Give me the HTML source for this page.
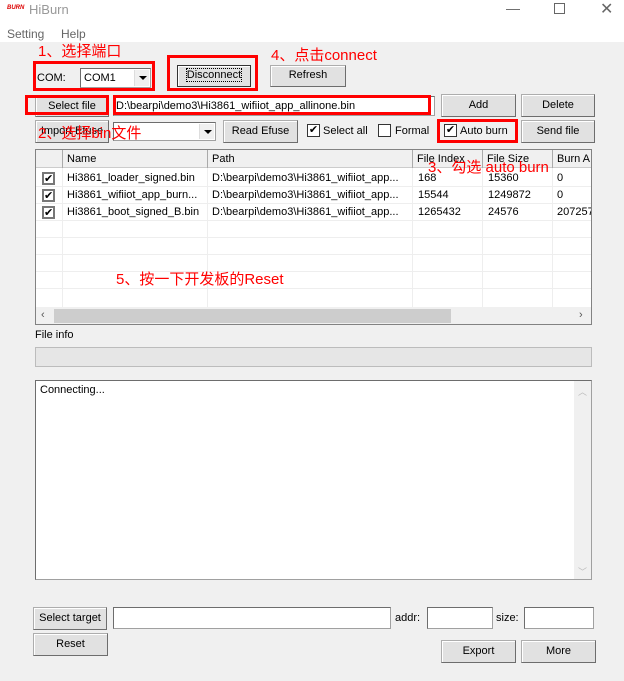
<!DOCTYPE html>
<html><head><meta charset="utf-8">
<style>
*{box-sizing:border-box;margin:0;padding:0}
body{width:624px;height:681px;position:relative;background:#f0f0f0;font-family:"Liberation Sans","Noto Sans CJK SC",sans-serif;font-size:11px;color:#000;overflow:hidden}
.a{position:absolute;white-space:nowrap}
.btn{position:absolute;background:#e1e1e1;border:1px solid #adadad;border-right-color:#6d6d6d;border-bottom-color:#6d6d6d;box-shadow:inset 1px 1px #fff;text-align:center;font-size:11px}
.tb{position:absolute;background:#fff;border:1px solid #a0a0a0;border-top-color:#6d6d6d;border-left-color:#6d6d6d}
.red{position:absolute;border:3px solid #f00}
.rt{position:absolute;color:#f00;font-size:15px;font-family:"Liberation Sans","Noto Sans CJK SC",sans-serif;white-space:nowrap}
.cb{position:absolute;width:13px;height:13px;border:1px solid #333;background:#fff;font-size:11px;line-height:11px;text-align:center}
.dd{position:absolute;width:15px;background:#f0f0f0;border-left:1px solid #ddd}
.dd:after{content:"";position:absolute;left:4px;top:6px;border-left:4px solid transparent;border-right:4px solid transparent;border-top:4px solid #000}
</style></head><body>
<div class="a" style="left:0;top:0;width:624px;height:42px;background:#fff"></div>
<div class="a" style="left:7px;top:5px;color:#d00;font-size:6px;font-style:italic;font-weight:bold">BURN</div>
<div class="a" style="left:29px;top:2px;font-size:13px;color:#999">HiBurn</div>
<div class="a" style="left:506px;top:0;font-size:14px;color:#666">—</div>
<div class="a" style="left:554px;top:3px;width:11px;height:11px;border:1px solid #666"></div>
<div class="a" style="left:600px;top:-1px;font-size:16px;color:#666">✕</div>
<div class="a" style="left:7px;top:27px;font-size:12px;color:#666">Setting</div>
<div class="a" style="left:61px;top:27px;font-size:12px;color:#666">Help</div>

<div class="rt" style="left:38px;top:40px">1、选择端口</div>
<div class="rt" style="left:271px;top:44px">4、点击connect</div>
<div class="red" style="left:33px;top:61px;width:122px;height:30px"></div>
<div class="a" style="left:37px;top:72px">COM:</div>
<div class="tb" style="left:80px;top:68px;width:71px;height:20px"><span style="position:absolute;left:3px;top:3px">COM1</span><div class="dd" style="right:1px;top:1px;height:16px"></div></div>
<div class="red" style="left:167px;top:55px;width:91px;height:36px"></div>
<div class="btn" style="left:177px;top:65px;width:74px;height:22px;line-height:19px;border:1px solid #333"><span style="outline:1px dotted #000">Disconnect</span></div>
<div class="btn" style="left:270px;top:65px;width:76px;height:22px;line-height:19px">Refresh</div>

<div class="btn" style="left:35px;top:95px;width:74px;height:22px;line-height:20px">Select file</div>
<div class="red" style="left:25px;top:95px;width:84px;height:20px"></div>
<div class="tb" style="left:113px;top:96px;width:322px;height:20px;padding:3px 2px">D:\bearpi\demo3\Hi3861_wifiiot_app_allinone.bin</div>
<div class="red" style="left:113px;top:95px;width:318px;height:20px"></div>
<div class="btn" style="left:441px;top:94px;width:75px;height:23px;line-height:21px">Add</div>
<div class="btn" style="left:521px;top:94px;width:74px;height:23px;line-height:21px">Delete</div>

<div class="btn" style="left:35px;top:120px;width:74px;height:23px;line-height:20px">Import Efuse</div>
<div class="tb" style="left:113px;top:122px;width:103px;height:19px"><div class="dd" style="right:1px;top:1px;height:15px"></div></div>
<div class="btn" style="left:223px;top:120px;width:75px;height:23px;line-height:20px">Read Efuse</div>
<div class="cb" style="left:307px;top:124px">✔</div><div class="a" style="left:323px;top:125px">Select all</div>
<div class="cb" style="left:378px;top:124px"></div><div class="a" style="left:395px;top:125px">Formal</div>
<div class="red" style="left:437px;top:119px;width:81px;height:24px"></div>
<div class="cb" style="left:444px;top:124px">✔</div><div class="a" style="left:460px;top:125px">Auto burn</div>
<div class="btn" style="left:521px;top:120px;width:74px;height:23px;line-height:20px">Send file</div>
<div class="rt" style="left:38px;top:122px">2、选择bin文件</div>

<!-- table -->
<div class="a" style="left:35px;top:149px;width:557px;height:176px;background:#fff;border:1px solid #828282;overflow:hidden">
<div class="a" style="left:0;top:0;width:557px;height:18px;background:#f0f0f0;border-bottom:1px solid #ccc"></div>
<svg class="a" style="left:0;top:0" width="557" height="160">
<g stroke="#aaa"><line x1="26.5" y1="0" x2="26.5" y2="18"/><line x1="171.5" y1="0" x2="171.5" y2="18"/><line x1="376.5" y1="0" x2="376.5" y2="18"/><line x1="446.5" y1="0" x2="446.5" y2="18"/><line x1="516.5" y1="0" x2="516.5" y2="18"/></g>
<g stroke="#eee"><line x1="26.5" y1="18" x2="26.5" y2="157"/><line x1="171.5" y1="18" x2="171.5" y2="157"/><line x1="376.5" y1="18" x2="376.5" y2="157"/><line x1="446.5" y1="18" x2="446.5" y2="157"/><line x1="516.5" y1="18" x2="516.5" y2="157"/>
<line x1="0" y1="36.5" x2="557" y2="36.5"/><line x1="0" y1="53.5" x2="557" y2="53.5"/><line x1="0" y1="70.5" x2="557" y2="70.5"/><line x1="0" y1="87.5" x2="557" y2="87.5"/><line x1="0" y1="104.5" x2="557" y2="104.5"/><line x1="0" y1="121.5" x2="557" y2="121.5"/><line x1="0" y1="138.5" x2="557" y2="138.5"/></g>
</svg>
<div class="a" style="left:31px;top:3px">Name</div><div class="a" style="left:176px;top:3px">Path</div><div class="a" style="left:381px;top:3px">File Index</div><div class="a" style="left:451px;top:3px">File Size</div><div class="a" style="left:521px;top:3px">Burn A</div>
<div class="cb" style="left:6px;top:22px;border:2px solid #777">✔</div><div class="a" style="left:31px;top:22px">Hi3861_loader_signed.bin</div><div class="a" style="left:176px;top:22px">D:\bearpi\demo3\Hi3861_wifiiot_app...</div><div class="a" style="left:382px;top:22px">168</div><div class="a" style="left:452px;top:22px">15360</div><div class="a" style="left:521px;top:22px">0</div>
<div class="cb" style="left:6px;top:39px;border:2px solid #777">✔</div><div class="a" style="left:31px;top:39px">Hi3861_wifiiot_app_burn...</div><div class="a" style="left:176px;top:39px">D:\bearpi\demo3\Hi3861_wifiiot_app...</div><div class="a" style="left:382px;top:39px">15544</div><div class="a" style="left:452px;top:39px">1249872</div><div class="a" style="left:521px;top:39px">0</div>
<div class="cb" style="left:6px;top:56px;border:2px solid #777">✔</div><div class="a" style="left:31px;top:56px">Hi3861_boot_signed_B.bin</div><div class="a" style="left:176px;top:56px">D:\bearpi\demo3\Hi3861_wifiiot_app...</div><div class="a" style="left:382px;top:56px">1265432</div><div class="a" style="left:452px;top:56px">24576</div><div class="a" style="left:521px;top:56px">207257</div>
<div class="a" style="left:0;top:157px;width:557px;height:18px;background:#f0f0f0"></div>
<div class="a" style="left:18px;top:159px;width:397px;height:14px;background:#cdcdcd"></div>
<div class="a" style="left:5px;top:159px;color:#555">‹</div><div class="a" style="left:543px;top:159px;color:#555">›</div>
</div>
<div class="rt" style="left:428px;top:156px">3、勾选 auto burn</div>
<div class="rt" style="left:116px;top:268px">5、按一下开发板的Reset</div>

<div class="a" style="left:35px;top:329px">File info</div>
<div class="a" style="left:35px;top:347px;width:557px;height:20px;background:#e6e6e6;border:1px solid #bcbcbc"></div>

<div class="tb" style="left:35px;top:380px;width:557px;height:200px">
<div class="a" style="left:4px;top:3px">Connecting...</div>
<div class="a" style="right:0;top:0;width:17px;height:198px;background:#f0f0f0"></div>
<div class="a" style="right:4px;top:4px;color:#bbb;font-size:9px">︿</div>
<div class="a" style="right:4px;top:184px;color:#bbb;font-size:9px">﹀</div>
</div>

<div class="btn" style="left:33px;top:607px;width:74px;height:23px;line-height:21px">Select target</div>
<div class="tb" style="left:113px;top:607px;width:278px;height:22px"></div>
<div class="a" style="left:395px;top:612px">addr:</div>
<div class="tb" style="left:427px;top:607px;width:66px;height:22px"></div>
<div class="a" style="left:496px;top:612px">size:</div>
<div class="tb" style="left:524px;top:607px;width:70px;height:22px"></div>
<div class="btn" style="left:33px;top:633px;width:75px;height:23px;line-height:21px">Reset</div>
<div class="btn" style="left:441px;top:640px;width:75px;height:23px;line-height:21px">Export</div>
<div class="btn" style="left:521px;top:640px;width:75px;height:23px;line-height:21px">More</div>
</body></html>
